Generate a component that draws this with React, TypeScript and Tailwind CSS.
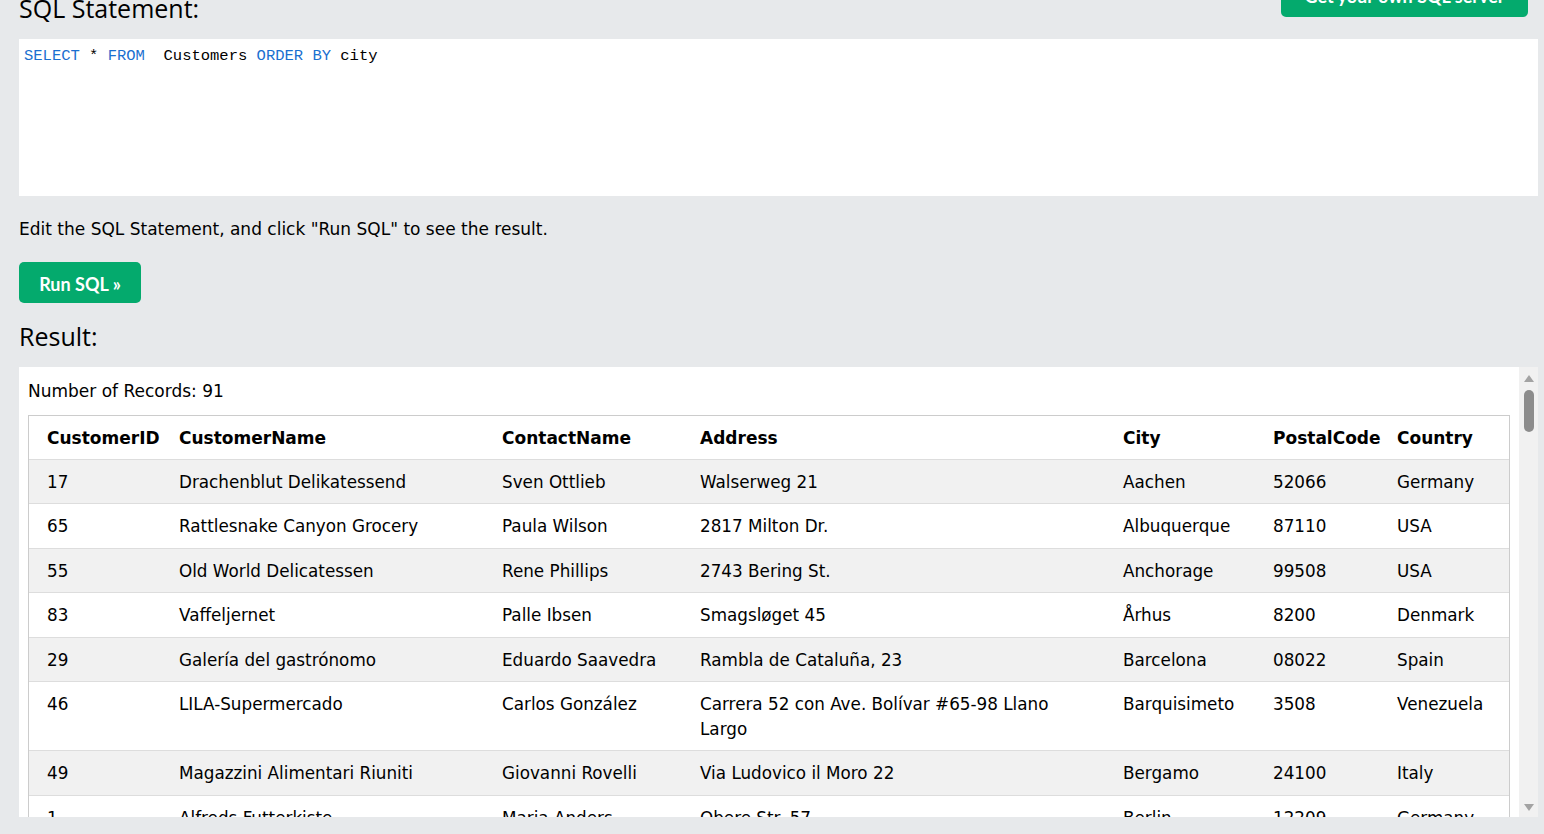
import React from "react";

type Row = {
  id: string;
  name: string;
  contact: string;
  address: string;
  city: string;
  postal: string;
  country: string;
};

const rows: Row[] = [
  { id: "17", name: "Drachenblut Delikatessend", contact: "Sven Ottlieb", address: "Walserweg 21", city: "Aachen", postal: "52066", country: "Germany" },
  { id: "65", name: "Rattlesnake Canyon Grocery", contact: "Paula Wilson", address: "2817 Milton Dr.", city: "Albuquerque", postal: "87110", country: "USA" },
  { id: "55", name: "Old World Delicatessen", contact: "Rene Phillips", address: "2743 Bering St.", city: "Anchorage", postal: "99508", country: "USA" },
  { id: "83", name: "Vaffeljernet", contact: "Palle Ibsen", address: "Smagsløget 45", city: "Århus", postal: "8200", country: "Denmark" },
  { id: "29", name: "Galería del gastrónomo", contact: "Eduardo Saavedra", address: "Rambla de Cataluña, 23", city: "Barcelona", postal: "08022", country: "Spain" },
  { id: "46", name: "LILA-Supermercado", contact: "Carlos González", address: "Carrera 52 con Ave. Bolívar #65-98 Llano Largo", city: "Barquisimeto", postal: "3508", country: "Venezuela" },
  { id: "49", name: "Magazzini Alimentari Riuniti", contact: "Giovanni Rovelli", address: "Via Ludovico il Moro 22", city: "Bergamo", postal: "24100", country: "Italy" },
  { id: "1", name: "Alfreds Futterkiste", contact: "Maria Anders", address: "Obere Str. 57", city: "Berlin", postal: "12209", country: "Germany" },
  { id: "12", name: "Cactus Comidas para llevar", contact: "Patricio Simpson", address: "Cerrito 333", city: "Buenos Aires", postal: "1010", country: "Argentina" },
];

const headers = ["CustomerID", "CustomerName", "ContactName", "Address", "City", "PostalCode", "Country"];

function ScrollBar() {
  return (
    <div className="w-[19px] shrink-0 bg-[#f1f1f1] flex flex-col items-center pt-[8px] pb-[6px]">
      <div className="w-0 h-0 border-l-[5px] border-r-[5px] border-b-[7px] border-l-transparent border-r-transparent border-b-[#a3a3a3]" />
      <div className="mt-[8px] w-[10px] h-[42px] rounded-full bg-[#8c8c8c]" />
      <div className="flex-1" />
      <div className="w-0 h-0 border-l-[5px] border-r-[5px] border-t-[7px] border-l-transparent border-r-transparent border-t-[#a3a3a3]" />
    </div>
  );
}

export default function App() {
  return (
    <div className="h-[834px] overflow-hidden bg-[#e7e9eb] pl-[19px] pr-[6px] text-black">
      {/* Top bar */}
      <div className="-mt-[7px] flex justify-between items-start">
        <h2 className="font-['Open_Sans',sans-serif] text-[25px] leading-[30px] font-normal">SQL Statement:</h2>
        <button className="-mt-[17px] mr-[10px] w-[247px] h-[41px] rounded-[5px] bg-[#04aa6d] text-white font-['Lato',sans-serif] font-bold text-[18px]">
          Get your own SQL server
        </button>
      </div>

      {/* Code editor */}
      <div className="mt-[16px] h-[157px] bg-white pl-[5px] pt-[7px] font-['Liberation_Mono',monospace] text-[15.5px] leading-[20px] whitespace-pre">
        <span className="text-[#1a6fd0]">SELECT</span> * <span className="text-[#1a6fd0]">FROM</span>  Customers{" "}
        <span className="text-[#1a6fd0]">ORDER BY</span> city
      </div>

      <p className="mt-[21px] font-['DejaVu_Sans',sans-serif] text-[17px] leading-[24px]">
        Edit the SQL Statement, and click "Run SQL" to see the result.
      </p>

      <button className="mt-[21px] w-[122px] h-[41px] pt-[3px] rounded-[5px] bg-[#04aa6d] text-white font-['Lato',sans-serif] font-bold text-[18px]">
        Run SQL »
      </button>

      <h2 className="mt-[18px] font-['Open_Sans',sans-serif] text-[25px] leading-[30px] font-normal">Result:</h2>

      {/* Result panel */}
      <div className="mt-[16px] h-[450px] bg-white flex overflow-hidden">
        <div className="flex-1 min-w-0 px-[9px] pt-[12px] font-['DejaVu_Sans',sans-serif] text-[16.8px] leading-[25px] overflow-hidden">
          <div className="text-[17px] leading-[24px]">Number of Records: 91</div>
          <div className="mt-[12px] border border-[#cccccc]">
            <table className="w-full table-fixed border-collapse text-left">
              <colgroup>
                <col className="w-[142px]" />
                <col className="w-[323px]" />
                <col className="w-[198px]" />
                <col className="w-[423px]" />
                <col className="w-[150px]" />
                <col className="w-[124px]" />
                <col className="w-[120px]" />
              </colgroup>
              <thead>
                <tr className="bg-white">
                  {headers.map((h, i) => (
                    <th
                      key={h}
                      className={`font-bold text-[17px] pt-[10px] pb-[8px] pr-[8px] align-top whitespace-nowrap ${i === 0 ? "pl-[18px]" : "pl-[8px]"}`}
                    >
                      {h}
                    </th>
                  ))}
                </tr>
              </thead>
              <tbody>
                {rows.map((r, i) => (
                  <tr
                    key={r.id}
                    className={`border-t border-[#dddddd] ${i % 2 === 0 ? "bg-[#f1f1f1]" : "bg-white"}`}
                  >
                    <td className="pt-[10px] pb-[8.4px] pl-[18px] pr-[8px] align-top">{r.id}</td>
                    <td className="pt-[10px] pb-[8.4px] px-[8px] align-top">{r.name}</td>
                    <td className="pt-[10px] pb-[8.4px] px-[8px] align-top">{r.contact}</td>
                    <td className="pt-[10px] pb-[8.4px] pl-[8px] pr-[24px] align-top">{r.address}</td>
                    <td className="pt-[10px] pb-[8.4px] px-[8px] align-top">{r.city}</td>
                    <td className="pt-[10px] pb-[8.4px] px-[8px] align-top">{r.postal}</td>
                    <td className="pt-[10px] pb-[8.4px] px-[8px] align-top">{r.country}</td>
                  </tr>
                ))}
              </tbody>
            </table>
          </div>
        </div>
        <ScrollBar />
      </div>
    </div>
  );
}
